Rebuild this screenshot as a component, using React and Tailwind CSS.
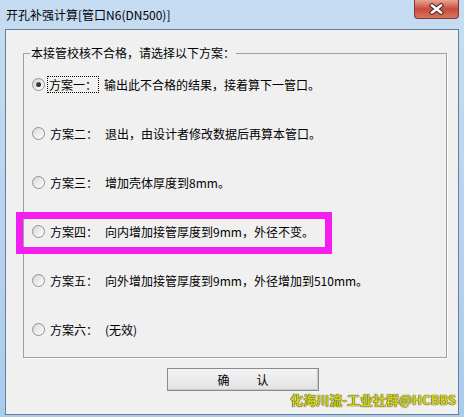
const font = { fontFamily: '"Noto Sans CJK SC", "Liberation Sans", sans-serif' }

const options = [
  ['方案一：', '输出此不合格的结果，接着算下一管口。'],
  ['方案二：', '退出，由设计者修改数据后再算本管口。'],
  ['方案三：', '增加壳体厚度到8mm。'],
  ['方案四：', '向内增加接管厚度到9mm，外径不变。'],
  ['方案五：', '向外增加接管厚度到9mm，外径增加到510mm。'],
  ['方案六：', '(无效)'],
]

function Radio({ checked }) {
  return (
    <span className="flex h-[13px] w-[13px] shrink-0 items-center justify-center rounded-full border border-[#8f9194] bg-linear-to-br from-[#d8d8d8] to-white">
      {checked && <span className="h-[5px] w-[5px] rounded-full bg-linear-to-br from-[#5a6068] to-[#15191f]" />}
    </span>
  )
}

function CloseButton() {
  return (
    <div className="mr-[5px] flex h-[19px] w-[45px] items-center justify-center rounded-b-[4px] border border-t-0 border-[#7d3a34] bg-linear-to-b from-[#e8a493] via-[#c9493a] to-[#d7745f]">
      <svg width="15" height="12" viewBox="0 0 15 12">
        <path d="M3 2.5 L12 9.5 M12 2.5 L3 9.5" stroke="#4a2424" strokeWidth="4.5" strokeLinecap="square" />
        <path d="M3 2.5 L12 9.5 M12 2.5 L3 9.5" stroke="#ffffff" strokeWidth="2.5" strokeLinecap="square" />
      </svg>
    </div>
  )
}

export default function App() {
  return (
    <div
      style={font}
      className="relative flex h-[417px] w-[464px] flex-col bg-linear-to-b from-[#c6dcf2] via-[#b9d4ef] to-[#a8ccef] text-[12px] text-black"
    >
      <div className="flex h-[29px] shrink-0 items-start justify-between">
        <div className="flex h-[29px] items-center pl-[6px] leading-[16px]">开孔补强计算[管口N6(DN500)]</div>
        <CloseButton />
      </div>

      <div className="mx-[5px] mb-[2px] flex flex-1 flex-col border border-[#6a7f97] bg-[#f0f0f0]">
        <div className="relative ml-[17px] mr-[11px] mt-[23px] border border-[#a0a0a0] pb-[3px] pt-[6px] shadow-[1px_1px_0_#ffffff]">
          <span className="absolute -top-[9px] left-[6px] bg-[#f0f0f0] px-[1px] leading-[16px]">
            本接管校核不合格，请选择以下方案：
          </span>
          {options.map(([label, desc], i) => (
            <div key={label} className="flex h-[49px] items-center pl-[8px] leading-[13px]">
              <Radio checked={i === 0} />
              <span
                className={
                  i === 0
                    ? 'ml-[2px] border border-dotted border-black px-[1px] py-[1px]'
                    : 'ml-[3px] border border-transparent px-[1px] py-[1px]'
                }
              >
                {label}
              </span>
              <span className="ml-[5px] whitespace-nowrap">{desc}</span>
            </div>
          ))}
        </div>

        <button className="ml-[161px] mt-[10px] flex h-[23px] w-[152px] items-center justify-center gap-[27px] border border-[#8c8c8c] bg-linear-to-b from-[#f4f4f4] to-[#e2e2e2] leading-[14px] shadow-[inset_-1px_-1px_0_#c8c8c8]">
          <span>确</span>
          <span>认</span>
        </button>

        <div className="mt-[2px] flex justify-end pr-[2px]">
          <span className="text-[13px] font-bold leading-[14px] text-[#d2d31a] [text-shadow:0_0_1px_#3c3c00,0_0_1px_#3c3c00]">
            化海川流-工业社群@HCBBS
          </span>
        </div>
      </div>

      <div className="pointer-events-none absolute left-[16px] top-[212px] h-[42px] w-[316px] border-[7px] border-[#f31ff0]" />
    </div>
  )
}
